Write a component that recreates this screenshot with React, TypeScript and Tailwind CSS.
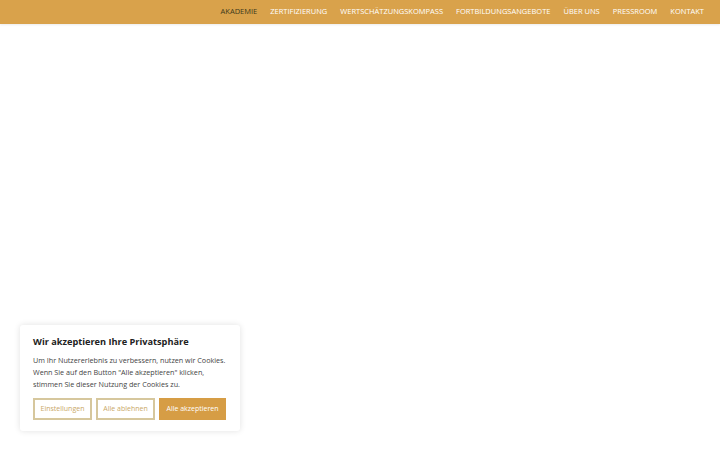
const links = [
  "Akademie",
  "Zertifizierung",
  "Wertschätzungskompass",
  "Fortbildungsangebote",
  "Über uns",
  "Pressroom",
  "Kontakt",
];

function Header() {
  return (
    <header className="h-[24px] bg-[#d9a24b] flex items-center justify-end pr-[16px] shadow-[0_1px_2px_rgba(0,0,0,0.08)]">
      <nav className="flex items-center gap-[13px]">
        {links.map((l, i) => (
          <a
            key={l}
            href="#"
            className={`uppercase text-[7.5px] leading-none ${
              i === 0 ? "text-[#3d3a1c]" : "text-white"
            }`}
          >
            {l}
          </a>
        ))}
      </nav>
    </header>
  );
}

function CookieBanner() {
  return (
    <div className="absolute left-[20px] top-[325px] w-[220px] bg-white rounded-[3px] shadow-[0_0_6px_rgba(0,0,0,0.12)] px-[13px] pt-[10px] pb-[11px]">
      <h2 className="text-[9.2px] font-bold text-[#222] leading-[14px]">
        Wir akzeptieren Ihre Privatsphäre
      </h2>
      <p className="mt-[5px] text-[7.2px] leading-[12px] text-[#444]">
        Um Ihr Nutzererlebnis zu verbessern, nutzen wir Cookies. Wenn Sie auf den Button "Alle akzeptieren" klicken,
        stimmen Sie dieser Nutzung der Cookies zu.
      </p>
      <div className="mt-[8px] flex gap-[4px]">
        <button className="h-[22px] w-[59px] border-2 border-[#d6c79d] text-[#c9a868] text-[7px]">
          Einstellungen
        </button>
        <button className="h-[22px] w-[59px] border-2 border-[#d6c79d] text-[#c9a868] text-[7px]">
          Alle ablehnen
        </button>
        <button className="h-[22px] w-[67px] border-2 border-[#d69d45] bg-[#d69d45] text-white text-[7px]">
          Alle akzeptieren
        </button>
      </div>
    </div>
  );
}

export default function App() {
  return (
    <div className="relative w-[720px] h-[450px] bg-white overflow-hidden font-['Open_Sans',sans-serif]">
      <Header />
      <CookieBanner />
    </div>
  );
}
